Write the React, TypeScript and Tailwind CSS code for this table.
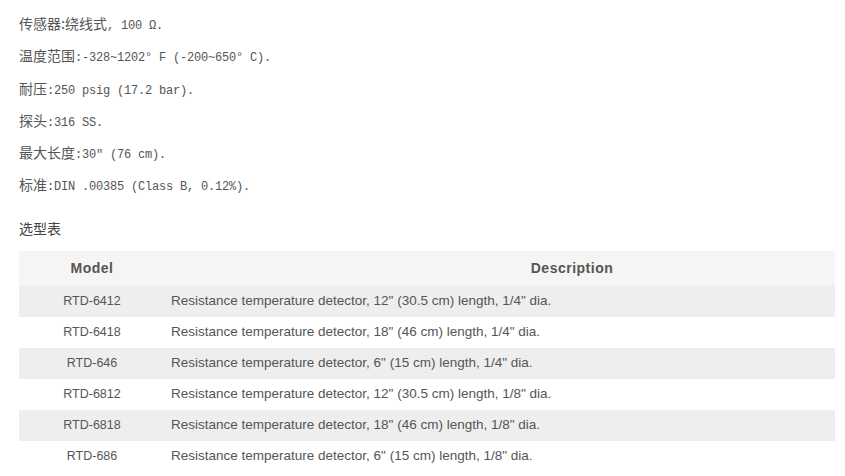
const specs = [
  { label: "传感器:", rest: "绕线式, 100 Ω.", cjkRest: true },
  { label: "温度范围", rest: ":-328~1202° F (-200~650° C)." },
  { label: "耐压", rest: ":250 psig (17.2 bar)." },
  { label: "探头", rest: ":316 SS." },
  { label: "最大长度", rest: ":30″ (76 cm)." },
  { label: "标准", rest: ":DIN .00385 (Class B, 0.12%)." },
];

const rows = [
  ["RTD-6412", 'Resistance temperature detector, 12" (30.5 cm) length, 1/4" dia.'],
  ["RTD-6418", 'Resistance temperature detector, 18" (46 cm) length, 1/4" dia.'],
  ["RTD-646", 'Resistance temperature detector, 6" (15 cm) length, 1/4" dia.'],
  ["RTD-6812", 'Resistance temperature detector, 12" (30.5 cm) length, 1/8" dia.'],
  ["RTD-6818", 'Resistance temperature detector, 18" (46 cm) length, 1/8" dia.'],
  ["RTD-686", 'Resistance temperature detector, 6" (15 cm) length, 1/8" dia.'],
];

export default function App() {
  return (
    <div className="w-[845px] h-[476px] overflow-hidden bg-white pl-[19px] pt-[7px] text-[#555]">
      <div className="flex flex-col">
        {specs.map((s, i) => (
          <div key={i} className="h-[32.3px] leading-[32px] whitespace-pre">
            <span className="text-[14px] font-['Noto_Sans_CJK_SC',sans-serif]">{s.label}</span>
            {s.cjkRest ? (
              <>
                <span className="text-[14px] font-['Noto_Sans_CJK_SC',sans-serif]">绕线式</span>
                <span className="text-[12px] tracking-[-0.2px] font-['Liberation_Mono',monospace]">, 100 Ω.</span>
              </>
            ) : (
              <span className="text-[12px] tracking-[-0.2px] font-['Liberation_Mono',monospace]">{s.rest}</span>
            )}
          </div>
        ))}
      </div>
      <div className="mt-[18px] h-[20px] flex items-center text-[14px] font-['Noto_Sans_CJK_SC',sans-serif] text-[#444]">
        选型表
      </div>
      <div className="mt-[12px] w-[816px] font-['Liberation_Sans',Arial,sans-serif] text-[13.5px]">
        <div className="grid grid-cols-[146px_1fr] h-[35px] items-center bg-[#f5f5f5] font-bold text-[14px] tracking-[0.5px] text-[#555]">
          <div className="text-center">Model</div>
          <div className="text-center pl-[144px]">Description</div>
        </div>
        {rows.map((r, i) => (
          <div
            key={r[0]}
            className={`grid grid-cols-[146px_1fr] h-[31px] items-center ${i % 2 === 0 ? "bg-[#eeeeee]" : "bg-white"}`}
          >
            <div className="text-center text-[12.5px]">{r[0]}</div>
            <div className="pl-[6px]">{r[1]}</div>
          </div>
        ))}
      </div>
    </div>
  );
}
